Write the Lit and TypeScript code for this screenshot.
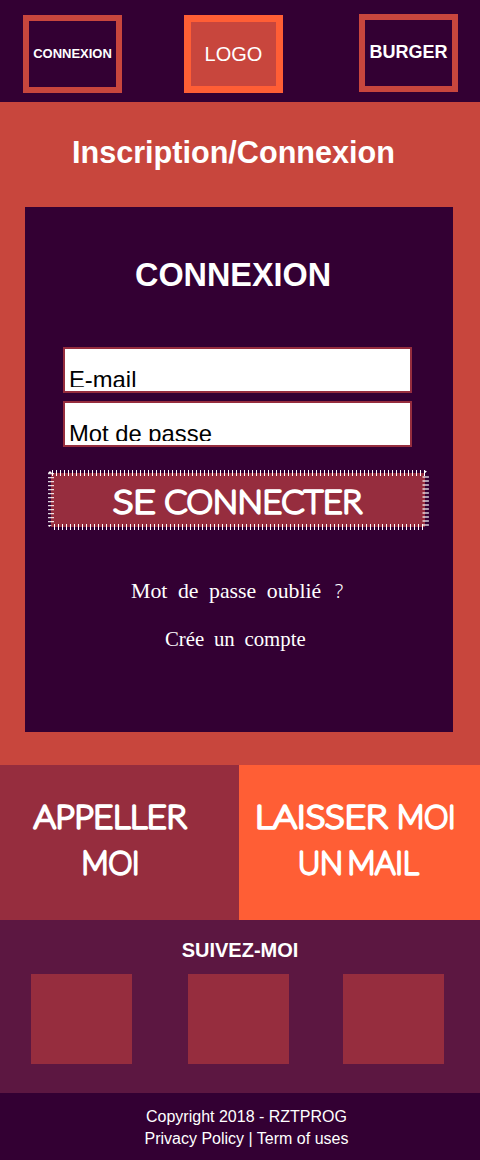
import { LitElement, html, css, svg } from "lit";
import { customElement } from "lit/decorators.js";

interface Word {
  text: string;
  x: number;
  y: number;
  width: number;
}

const hand = (words: Word[]) =>
  words.map(
    (w) => svg`<text class="hand" x=${w.x} y=${w.y} textLength=${w.width} lengthAdjust="spacingAndGlyphs">${w.text}</text>`
  );

@customElement("app-root")
export class AppRoot extends LitElement {
  static styles = css`
    :host {
      display: block;
      width: 480px;
      height: 1160px;
      overflow: hidden;
      color: #fff;
      background: #330033;
      font-family: "Liberation Sans", Arial, sans-serif;
    }
    * {
      box-sizing: border-box;
    }
    h1,
    h2,
    h3,
    p {
      margin: 0;
    }
    .header {
      height: 102px;
      padding: 14px 22px 0 23px;
      display: flex;
      justify-content: flex-start;
      align-items: flex-start;
    }
    .box {
      width: 99px;
      height: 78px;
      border: 6px solid #c8463d;
      display: flex;
      justify-content: center;
      line-height: 20px;
      white-space: nowrap;
      font-weight: bold;
    }
    .login {
      margin-top: 1px;
      font-size: 13px;
      padding-top: 23px;
    }
    .logo {
      margin: 1px 76px 0 62px;
      border: 7px solid #ff5e35;
      background: #c8463d;
      font-size: 20px;
      font-weight: normal;
      padding-top: 22px;
    }
    .burger {
      font-size: 18px;
      padding-top: 22px;
    }
    .main {
      height: 663px;
      background: #c8463d;
      padding: 30px 27px 0 24px;
    }
    .title {
      font-size: 30.6px;
      line-height: 40px;
      padding-left: 48px;
      margin-bottom: 35px;
    }
    .card {
      height: 525px;
      margin-left: 1px;
      width: 428px;
      background: #330033;
      padding: 48px 0 0 23px;
      display: flex;
      flex-direction: column;
      align-items: flex-start;
    }
    .card-title {
      font-size: 32.4px;
      line-height: 40px;
      margin: 0 0 52px 87px;
    }
    .field {
      width: 349px;
      height: 46px;
      margin: 0 0 8px 15px;
      border: 2px solid #962d3e;
      background: #fff;
      color: #000;
      padding: 17px 4px 4px;
    }
    .value {
      height: 21px;
      overflow: hidden;
      font-size: 23.8px;
      line-height: 28px;
    }
    .submit {
      display: block;
      margin-top: 15px;
      width: 381px;
      height: 60px;
      overflow: visible;
    }
    .hand {
      font-family: Lato, sans-serif;
      font-weight: 100;
      font-size: 32px;
      fill: #fff;
      stroke: #fff;
      stroke-width: 3.3px;
      stroke-linejoin: round;
      stroke-linecap: round;
    }
    .link {
      font-family: "Liberation Serif", serif;
      font-size: 21.8px;
      line-height: 28px;
      word-spacing: 5.1px;
      white-space: pre;
      margin: 47px 0 0 83px;
    }
    .create {
      font-size: 20.8px;
      word-spacing: 4.5px;
      margin: 20px 0 0 117px;
    }
    .mark {
      font-family: "Noto Sans", sans-serif;
      font-weight: 300;
      font-size: 20px;
      line-height: 1;
      margin-left: 3px;
    }
    .contact {
      display: grid;
      grid-template-columns: 239px 241px;
      height: 155px;
    }
    .call {
      background: #962d3e;
    }
    .mail {
      background: #ff5e35;
    }
    .panel {
      display: block;
      width: 100%;
      height: 155px;
    }
    .social {
      height: 173px;
      background: #5c1741;
      padding-top: 19px;
    }
    .follow {
      font-size: 20px;
      line-height: 22px;
      text-align: center;
      margin-bottom: 13px;
    }
    .tiles {
      display: grid;
      grid-template-columns: 101px 101px 101px;
      column-gap: 56px;
      padding-left: 31px;
    }
    .tile {
      height: 90px;
      background: #962d3e;
    }
    .tile:last-child {
      margin: 0 1px 0 -2px;
      width: 101px;
    }
    .footer {
      padding: 13px 0 0 13px;
      text-align: center;
      font-size: 16px;
      line-height: 22px;
    }
  `;

  render() {
    return html`
      <header class="header">
        <div class="box login">CONNEXION</div>
        <div class="box logo">LOGO</div>
        <div class="box burger">BURGER</div>
      </header>
      <main class="main">
        <h1 class="title">Inscription/Connexion</h1>
        <section class="card">
          <h2 class="card-title">CONNEXION</h2>
          <div class="field"><div class="value">E-mail</div></div>
          <div class="field"><div class="value">Mot de passe</div></div>
          <svg class="submit" viewBox="0 0 381 60">
            <rect x="3" y="3" width="374" height="54" fill="#962d3e" />
            <path d="M4 3H379" stroke="#fff" stroke-width="6" stroke-dasharray="1 3" />
            <path d="M6 57H377" stroke="#fff" stroke-width="6" stroke-dasharray="1 3" />
            <path d="M3 3V54" stroke="#fff" stroke-opacity=".85" stroke-width="6" stroke-dasharray="1.3 2.7" />
            <path d="M377.7 6V56" stroke="#fff" stroke-opacity=".6" stroke-width="6.4" stroke-dasharray="2 2" />
            <path d="M0 3L2 1L4 3Z M376 0L379 1.5L377 3Z M0 55H4L1 57Z" fill="#fff" />
            ${hand([
              { text: "SE", x: 65, y: 43, width: 42.5 },
              { text: "CONNECTER", x: 116.5, y: 43, width: 197.5 },
            ])}
          </svg>
          <p class="link">Mot de passe oublié <span class="mark">?</span></p>
          <p class="link create">Crée un compte</p>
        </section>
      </main>
      <section class="contact">
        <div class="call">
          <svg class="panel" viewBox="0 0 239 155">
            ${hand([
              { text: "APPELLER", x: 34, y: 63, width: 152.5 },
              { text: "MOI", x: 81.5, y: 109, width: 58 },
            ])}
          </svg>
        </div>
        <div class="mail">
          <svg class="panel" viewBox="0 0 241 155">
            ${hand([
              { text: "LAISSER", x: 16, y: 63, width: 132.5 },
              { text: "MOI", x: 158, y: 63, width: 58.5 },
              { text: "UN", x: 59, y: 109, width: 45 },
              { text: "MAIL", x: 108.5, y: 109, width: 71 },
            ])}
          </svg>
        </div>
      </section>
      <section class="social">
        <h3 class="follow">SUIVEZ-MOI</h3>
        <div class="tiles">
          <div class="tile"></div>
          <div class="tile"></div>
          <div class="tile"></div>
        </div>
      </section>
      <footer class="footer">
        <p>Copyright 2018 - RZTPROG</p>
        <p>Privacy Policy | Term of uses</p>
      </footer>
    `;
  }
}
